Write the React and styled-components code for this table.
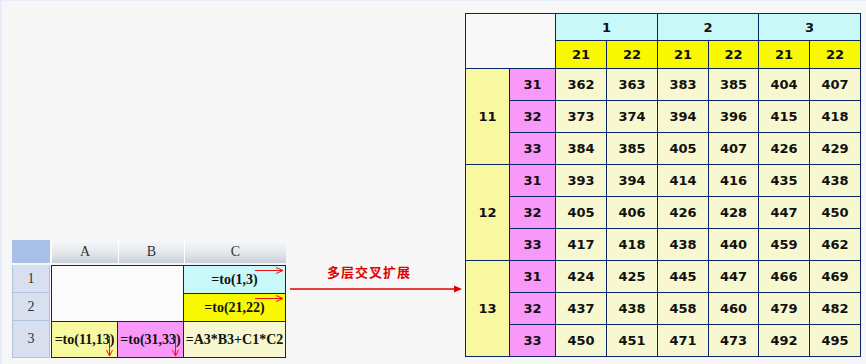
import React from "react";

// Packages
import styled, { createGlobalStyle } from "styled-components";

const NAVY = "#0a2466";

const topHeads = [
    { label: "1", subs: ["21", "22"] },
    { label: "2", subs: ["21", "22"] },
    { label: "3", subs: ["21", "22"] },
];

const groups = [
    {
        label: "11",
        rows: [
            ["31", [362, 363, 383, 385, 404, 407]],
            ["32", [373, 374, 394, 396, 415, 418]],
            ["33", [384, 385, 405, 407, 426, 429]],
        ],
    },
    {
        label: "12",
        rows: [
            ["31", [393, 394, 414, 416, 435, 438]],
            ["32", [405, 406, 426, 428, 447, 450]],
            ["33", [417, 418, 438, 440, 459, 462]],
        ],
    },
    {
        label: "13",
        rows: [
            ["31", [424, 425, 445, 447, 466, 469]],
            ["32", [437, 438, 458, 460, 479, 482]],
            ["33", [450, 451, 471, 473, 492, 495]],
        ],
    },
];

function RightArrow() {
    return (
        <ArrowRight width="29" height="7" viewBox="0 0 29 7">
            <line x1="0" y1="3.5" x2="28" y2="3.5" stroke="#ee1111" strokeWidth="1" />
            <polyline points="21,0.5 28,3.5 21,6.5" fill="none" stroke="#ee1111" strokeWidth="1" />
        </ArrowRight>
    );
}

function DownArrow() {
    return (
        <ArrowDown width="7" height="21" viewBox="0 0 7 21">
            <line x1="3.5" y1="0" x2="3.5" y2="20" stroke="#ee1111" strokeWidth="1" />
            <polyline points="0.5,14 3.5,20 6.5,14" fill="none" stroke="#ee1111" strokeWidth="1" />
        </ArrowDown>
    );
}

export default function App() {
    return (
        <Page>
            <GlobalStyle />
            <LeftPane>
                <Sheet>
                    <Corner />
                    <ColHeads>
                        <ColHead $w={67}>A</ColHead>
                        <ColHead $w={66}>B</ColHead>
                        <ColHead $w={102}>C</ColHead>
                    </ColHeads>
                    <RowHeads>
                        <RowHead $h={28}>1</RowHead>
                        <RowHead $h={28}>2</RowHead>
                        <RowHead $h={37}>3</RowHead>
                    </RowHeads>
                    <Cells>
                        <Cell $bg="#fbfbfb" $span={2} $rows={2} />
                        <Cell $bg="#c8f8f8">
                            =to(1,3)
                            <RightArrow />
                        </Cell>
                        <Cell $bg="#f8f800">
                            =to(21,22)
                            <RightArrow />
                        </Cell>
                        <Cell $bg="#f8f8a0">
                            =to(11,13)
                            <DownArrow />
                        </Cell>
                        <Cell $bg="#f898f8">
                            =to(31,33)
                            <DownArrow />
                        </Cell>
                        <Cell $bg="#f8f8d0">=A3*B3+C1*C2</Cell>
                    </Cells>
                </Sheet>
            </LeftPane>

            <Middle>
                <Caption>多层交叉扩展</Caption>
                <svg width="172" height="10" viewBox="0 0 172 10">
                    <line x1="0" y1="5" x2="166" y2="5" stroke="#e00000" strokeWidth="1.5" />
                    <polygon points="164,1.5 172,5 164,8.5" fill="#e00000" />
                </svg>
            </Middle>

            <Result>
                <Blank />
                {topHeads.map((h) => (
                    <Head key={h.label} $bg="#c8f8f8" $span={2}>
                        {h.label}
                    </Head>
                ))}
                {topHeads.map((h) =>
                    h.subs.map((s) => (
                        <Head key={h.label + s} $bg="#f8f800">
                            {s}
                        </Head>
                    ))
                )}
                {groups.map((g) => (
                    <React.Fragment key={g.label}>
                        <Head $bg="#f8f8a0" $rows={3}>
                            {g.label}
                        </Head>
                        {g.rows.map(([label, values]) => (
                            <React.Fragment key={g.label + label}>
                                <Head $bg="#f898f8">{label}</Head>
                                {values.map((v, i) => (
                                    <Head key={i} $bg="#f8f8d0">
                                        {v}
                                    </Head>
                                ))}
                            </React.Fragment>
                        ))}
                    </React.Fragment>
                ))}
            </Result>
        </Page>
    );
}

const GlobalStyle = createGlobalStyle`
    body {
        margin: 0;
        background: #f7f7f7;
    }
`;
const Page = styled.div`
    display: flex;
    box-sizing: border-box;
    width: 866px;
    height: 364px;
    padding-left: 10px;
    border-left: 2px solid #e6edf8;
    border-top: 1px solid #e6edf8;
    background: #f7f7f7;
    overflow: hidden;
`;
const LeftPane = styled.div`
    align-self: flex-end;
    margin-bottom: 6px;
`;
const Sheet = styled.div`
    display: grid;
    grid-template-columns: 38px 235px;
    grid-template-rows: 23px 93px;
    column-gap: 1px;
    row-gap: 2px;
    font-family: "Liberation Serif", serif;
`;
const Corner = styled.div`
    background: #a8c0e8;
`;
const ColHeads = styled.div`
    display: flex;
`;
const ColHead = styled.div`
    box-sizing: border-box;
    width: ${(p) => p.$w}px;
    display: flex;
    align-items: center;
    justify-content: center;
    border-left: 1px solid #ffffff;
    background: linear-gradient(#f7f8fa, #e4e7ec 55%, #c9ced8);
    color: #333;
    font-size: 14px;
`;
const RowHeads = styled.div`
    display: flex;
    flex-direction: column;
`;
const RowHead = styled.div`
    box-sizing: border-box;
    height: ${(p) => p.$h}px;
    display: flex;
    align-items: center;
    justify-content: center;
    background: #d8e0f0;
    border: 1px solid #b4c4e0;
    border-top: none;
    color: #333;
    font-size: 14px;
`;
const Cells = styled.div`
    display: grid;
    grid-template-columns: 65px 65px 101px;
    grid-template-rows: 27px 27px 35px;
    gap: 1px;
    padding: 1px;
    background: ${NAVY};
`;
const Cell = styled.div`
    position: relative;
    display: flex;
    align-items: center;
    justify-content: center;
    grid-column: ${(p) => (p.$span ? `span ${p.$span}` : "auto")};
    grid-row: ${(p) => (p.$rows ? `span ${p.$rows}` : "auto")};
    background: ${(p) => p.$bg};
    color: #111;
    font-size: 14px;
    font-weight: bold;
    white-space: nowrap;
    &:nth-child(2) {
        grid-column: 3;
    }
`;
const ArrowRight = styled.svg`
    position: absolute;
    top: 1px;
    right: 1px;
`;
const ArrowDown = styled.svg`
    position: absolute;
    right: 4px;
    bottom: 0;
`;
const Middle = styled.div`
    display: flex;
    flex-direction: column;
    width: 179px;
    margin-top: 263px;
    padding-left: 4px;
    box-sizing: border-box;
`;
const Caption = styled.div`
    padding-left: 37px;
    margin-bottom: 4px;
    color: #e00000;
    font-family: "Noto Sans CJK SC", sans-serif;
    font-size: 13px;
    font-weight: bold;
    line-height: 16px;
    letter-spacing: 1px;
`;
const Result = styled.div`
    align-self: flex-start;
    margin-top: 12px;
    display: grid;
    grid-template-columns: 43px 45px 50px 50px 50px 49px 50px 50px;
    grid-template-rows: 26px 27px repeat(9, 31px);
    gap: 1px;
    padding: 1px;
    background: ${NAVY};
    font-family: "DejaVu Sans", Verdana, sans-serif;
`;
const Blank = styled.div`
    grid-column: span 2;
    grid-row: span 2;
    background: #f8f8f8;
`;
const Head = styled.div`
    display: flex;
    align-items: center;
    justify-content: center;
    grid-column: ${(p) => (p.$span ? `span ${p.$span}` : "auto")};
    grid-row: ${(p) => (p.$rows ? `span ${p.$rows}` : "auto")};
    background: ${(p) => p.$bg};
    color: #111;
    font-size: 13px;
    font-weight: bold;
`;
